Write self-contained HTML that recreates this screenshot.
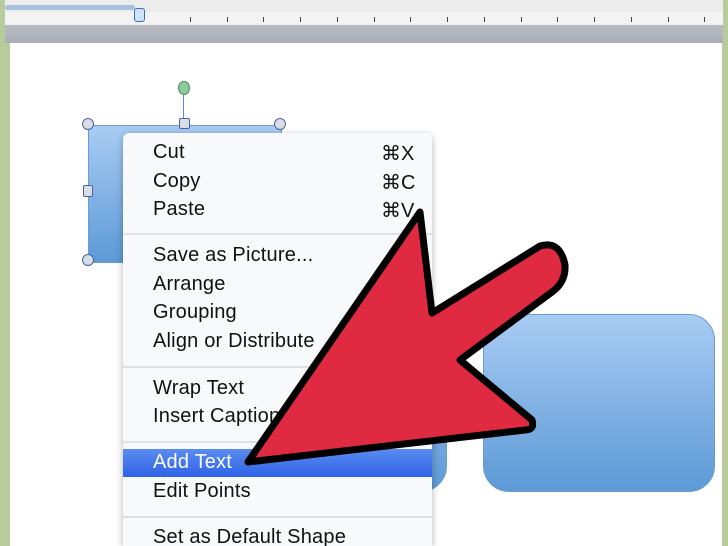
<!DOCTYPE html>
<html><head><style>
html,body{margin:0;width:728px;height:546px;overflow:hidden}
body{background:#b6cc9c;font-family:"Liberation Sans",sans-serif;position:relative}
.ruler{position:absolute;left:5px;top:0;width:718px;height:25px;background:#ececec}
.bar{position:absolute;left:5px;top:25px;width:718px;height:18px;background:linear-gradient(#b9bcc4,#a9adb6)}
.page{position:absolute;left:10px;top:43px;width:712px;height:503px;background:#fff}
.shape{position:absolute;background:linear-gradient(#a8ccf4,#5d9ad6);border:1px solid #6b9bd0}
.menu{position:absolute;left:123px;top:133px;width:309px;height:413px;background:#f8f9fb;border-radius:6px 6px 0 0;box-shadow:0 2px 8px rgba(0,0,0,.3)}
.it{position:absolute;left:30px;font-size:20px;color:#111;letter-spacing:.2px}
.sc{position:absolute;left:258px;font-size:20px;color:#111}
.sep{position:absolute;left:0;width:309px;height:2px;background:#e0e0e0}
.h{position:absolute;border:1.5px solid #4a63a0;background:#d8dde8}
.t{position:absolute;width:1px;background:#444}
</style></head><body>
<div class="ruler"></div>
<div style="position:absolute;left:5px;top:12px;width:718px;height:13px;background:#f3f3f3"></div>
<div style="position:absolute;left:5px;top:5px;width:130px;height:5px;background:#a6c0e0;border-radius:3px"></div>
<div class="t" style="left:190px;top:17px;height:5px"></div><div class="t" style="left:227px;top:17px;height:5px"></div><div class="t" style="left:263px;top:17px;height:5px"></div><div class="t" style="left:300px;top:17px;height:5px"></div><div class="t" style="left:337px;top:17px;height:5px"></div><div class="t" style="left:374px;top:17px;height:5px"></div><div class="t" style="left:410px;top:17px;height:5px"></div><div class="t" style="left:447px;top:17px;height:5px"></div><div class="t" style="left:484px;top:17px;height:5px"></div><div class="t" style="left:521px;top:17px;height:5px"></div><div class="t" style="left:557px;top:17px;height:5px"></div><div class="t" style="left:594px;top:17px;height:5px"></div><div class="t" style="left:631px;top:17px;height:5px"></div><div class="t" style="left:668px;top:17px;height:5px"></div><div class="t" style="left:704px;top:17px;height:5px"></div>
<div style="position:absolute;left:134px;top:8px;width:9px;height:12px;border:1.5px solid #3a6ac0;border-radius:3px;background:#cfe4fa"></div>
<div class="bar"></div>
<div class="page"></div>
<div class="shape" style="left:88px;top:125px;width:192px;height:136px"></div>
<div class="shape" style="left:200px;top:314px;width:245px;height:176px;border-radius:26px"></div>
<div class="shape" style="left:483px;top:314px;width:230px;height:176px;border-radius:26px"></div>
<div style="position:absolute;left:183px;top:92px;width:1px;height:32px;background:#5a8ae0"></div>
<div class="h" style="left:178px;top:81px;width:10px;height:12px;border-radius:50%;background:#8ccc9a;border-color:#4a8a5a"></div>
<div class="h" style="left:82px;top:118px;width:10px;height:10px;border-radius:50%"></div>
<div class="h" style="left:274px;top:118px;width:10px;height:10px;border-radius:50%"></div>
<div class="h" style="left:179px;top:118px;width:9px;height:9px;border-radius:2px"></div>
<div class="h" style="left:83px;top:185px;width:8px;height:10px;border-radius:2px"></div>
<div class="h" style="left:82px;top:254px;width:10px;height:10px;border-radius:50%"></div>
<div class="menu">
<div class="it" style="top:8px">Cut</div><div class="sc" style="top:8px">⌘X</div>
<div class="it" style="top:37px">Copy</div><div class="sc" style="top:37px">⌘C</div>
<div class="it" style="top:65px">Paste</div><div class="sc" style="top:65px">⌘V</div>
<div class="sep" style="top:100px"></div>
<div class="it" style="top:111px">Save as Picture...</div>
<div class="it" style="top:140px">Arrange</div>
<div class="it" style="top:168px">Grouping</div>
<div class="it" style="top:197px">Align or Distribute</div>
<div class="sep" style="top:233px"></div>
<div class="it" style="top:244px">Wrap Text</div>
<div class="it" style="top:272px">Insert Caption</div>
<div class="sep" style="top:308px"></div>
<div style="position:absolute;left:0;top:316px;width:309px;height:28px;background:linear-gradient(#5a8cf0,#2f62e8)"></div>
<div class="it" style="top:318px;color:#fff">Add Text</div>
<div class="it" style="top:347px">Edit Points</div>
<div class="sep" style="top:383px"></div>
<div class="it" style="top:393px">Set as Default Shape</div>
</div>
<svg style="position:absolute;left:0;top:0" width="728" height="546">
<path d="M248,462 L420,212 L432,313 L540,246 Q560,240 565,265 Q566,282 552,292 L460,360 L532,420 Q535,430 525,430 Z" fill="#e02a42" stroke="#000" stroke-width="7" stroke-linejoin="round"/>
</svg>
</body></html>
